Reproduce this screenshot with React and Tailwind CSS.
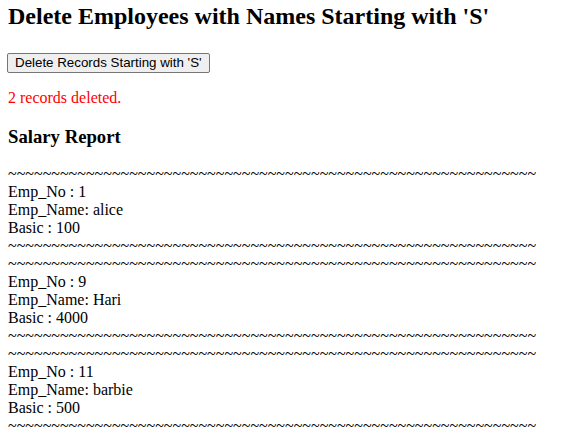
const records = [
  { no: 1, name: 'alice', basic: 100 },
  { no: 9, name: 'Hari', basic: 4000 },
  { no: 11, name: 'barbie', basic: 500 },
];

const tildes = '~'.repeat(61);

export default function App() {
  return (
    <div className="min-h-screen bg-white px-2 pt-[3px] font-['Liberation_Serif',serif] text-black">
      <h2 className="mb-[20px] text-[24px] font-bold leading-[27px]">
        Delete Employees with Names Starting with 'S'
      </h2>

      <button
        type="button"
        className="-ml-px h-[20px] rounded-[2px] border border-[#767676] bg-[#efefef] px-[7px] font-['Liberation_Sans',Arial,sans-serif] text-[13.333px] leading-[16px] text-black"
      >
        Delete Records Starting with 'S'
      </button>

      <p className="mt-[15px] text-[16px] leading-[18px] text-[#f00]">2 records deleted.</p>

      <h3 className="mt-[19px] mb-[18px] text-[18.72px] font-bold leading-[21px]">Salary Report</h3>

      <div className="text-[16px] leading-[18px]">
        {records.map((r) => (
          <div key={r.no}>
            <div>{tildes}</div>
            <div>Emp_No : {r.no}</div>
            <div>Emp_Name: {r.name}</div>
            <div>Basic : {r.basic}</div>
            <div>{tildes}</div>
          </div>
        ))}
      </div>
    </div>
  );
}
